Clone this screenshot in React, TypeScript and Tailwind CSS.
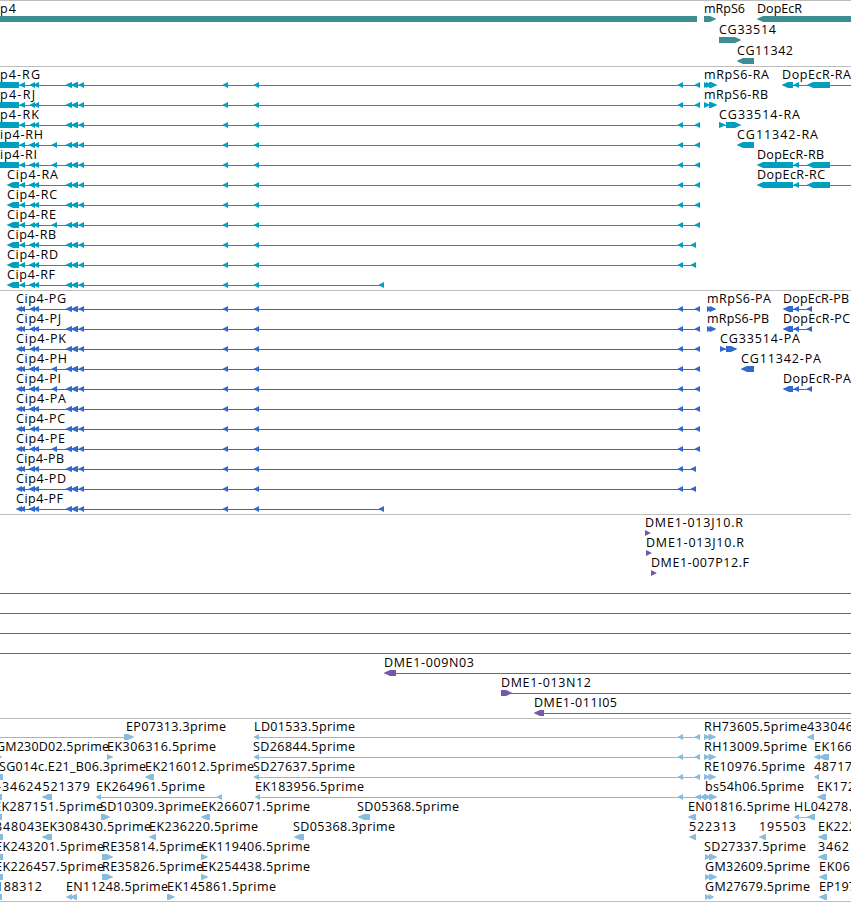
import React from 'react';

type Dir = 'L' | 'R' | 'B';
type Exon = [start: number, end: number, dir: Dir];

interface Feature {
  label?: string;
  x?: number;
  width?: number;
  exons?: Exon[];
  line?: [number, number];
}

interface TrackProps {
  rows: Feature[][];
  className: string;
  rowClassName?: string;
}

const VIEW_WIDTH = 851;
const HEAD = 6;

const exonPath = ([start, end, dir]: Exon): string => {
  const head = Math.min(HEAD, end - start);
  if (dir === 'L') {
    return `M${start} 17.8L${start + head} 15H${end}V21H${start + head}L${start} 18.3Z`;
  }
  if (dir === 'R') {
    return `M${start} 15H${end - head}L${end} 17.8V18.3L${end - head} 21H${start}Z`;
  }
  return `M${start} 15H${end}V21H${start}Z`;
};

const FeatureGlyph: React.FC<{ feature: Feature }> = ({ feature }) => (
  <g>
    {feature.line && (
      <rect x={feature.line[0]} y={18} width={feature.line[1] - feature.line[0]} height={1} />
    )}
    {feature.exons?.map((exon, i) => (
      <path key={i} d={exonPath(exon)} />
    ))}
    {feature.label && (
      <text x={feature.x} y={12} textLength={feature.width} className="fill-black">
        {feature.label}
      </text>
    )}
  </g>
);

const Track: React.FC<TrackProps> = ({ rows, className, rowClassName = 'h-5' }) => (
  <section className={`w-full border-t border-[#bebebe] overflow-hidden ${className}`}>
    {rows.map((features, i) => (
      <svg
        key={i}
        width={VIEW_WIDTH}
        className={`block overflow-visible font-['Open_Sans',sans-serif] text-[12.5px] fill-current ${rowClassName}`}
      >
        {features.map((feature, j) => (
          <FeatureGlyph key={j} feature={feature} />
        ))}
      </svg>
    ))}
  </section>
);

// Genes

const GENES: Feature[][] = [
  [
    { label: 'p4', x: 0, width: 16, exons: [[0, 697, 'B']] },
    { label: 'mRpS6', x: 704, width: 41, exons: [[704, 716, 'R']] },
    { label: 'DopEcR', x: 757, width: 45, exons: [[757, 860, 'L']] },
  ],
  [{ label: 'CG33514', x: 719, width: 57, exons: [[719, 741, 'R']] }],
  [{ label: 'CG11342', x: 737, width: 56, exons: [[737, 754, 'L']] }],
];

// Cip4 isoforms share everything but the first exons and the last one

interface Isoform {
  label: string;
  x: number;
  width: number;
  first: Exon[];
  second: number;
  extra?: boolean;
  last: number;
}

const cip4 = ({ label, x, width, first, second, extra, last }: Isoform): Feature => {
  const exons: Exon[] = [
    ...first,
    [second, 35, 'L'],
    [33.5, 39, 'L'],
    [65.7, 72, 'L'],
    [71, 78, 'L'],
    [78.5, 84, 'L'],
    [222.7, 228, 'L'],
    [253.7, 259, 'L'],
  ];
  if (extra) exons.push([51.5, 57, 'L']);
  if (last > 600) exons.push([677.7, 683, 'L']);
  exons.push([last - 5.3, last, 'L']);
  return { label, x, width, exons, line: [first[0][0] + 3, last] };
};

const LONG_UTR: Exon[] = [[0, 19, 'B'], [19.3, 25, 'L']];
const SHORT_UTR: Exon[] = [[7, 19, 'L'], [19.3, 25, 'L']];
const CODING: Exon[] = [[16, 22, 'L'], [19.5, 25, 'L']];

const MRPS6_R: Exon[] = [[704, 709, 'R'], [706, 712, 'R'], [709, 717, 'R']];
const MRPS6_P: Exon[] = [[707, 712, 'R'], [709.5, 716, 'R']];
const DOPECR_R: Exon[] = [[757, 793, 'L'], [793.5, 799, 'L'], [807, 830, 'L']];
const DOPECR_P: Exon[] = [[783, 793, 'L'], [793.5, 799, 'L'], [806.7, 812, 'L']];

const TRANSCRIPTS: Feature[][] = [
  [
    cip4({ label: 'p4-RG', x: 0, width: 40, first: LONG_UTR, second: 29.7, last: 700 }),
    { label: 'mRpS6-RA', x: 704, width: 65, exons: MRPS6_R },
    { label: 'DopEcR-RA', x: 782, width: 69, exons: [[782, 793, 'L'], [793.5, 799, 'L'], [807, 830, 'L']], line: [785, 851] },
  ],
  [
    cip4({ label: 'p4-RJ', x: 0, width: 35, first: LONG_UTR, second: 29.7, last: 700 }),
    { label: 'mRpS6-RB', x: 704, width: 64, exons: [[704, 710, 'R'], [709, 717, 'R']] },
  ],
  [
    cip4({ label: 'p4-RK', x: 0, width: 39, first: LONG_UTR, second: 29.7, last: 700 }),
    { label: 'CG33514-RA', x: 719, width: 81, exons: [[719, 725.5, 'R'], [726, 741, 'R']], line: [720, 730] },
  ],
  [
    cip4({ label: 'ip4-RH', x: 0, width: 43, first: LONG_UTR, second: 28.7, extra: true, last: 700 }),
    { label: 'CG11342-RA', x: 737, width: 81, exons: [[737, 754, 'L']] },
  ],
  [
    cip4({ label: 'ip4-RI', x: 0, width: 37, first: LONG_UTR, second: 29, extra: true, last: 700 }),
    { label: 'DopEcR-RB', x: 757, width: 67, exons: DOPECR_R, line: [760, 851] },
  ],
  [
    cip4({ label: 'Cip4-RA', x: 7, width: 51, first: SHORT_UTR, second: 28.7, last: 700 }),
    { label: 'DopEcR-RC', x: 757, width: 68, exons: DOPECR_R, line: [760, 851] },
  ],
  [cip4({ label: 'Cip4-RC', x: 7, width: 50, first: SHORT_UTR, second: 29.7, last: 700 })],
  [cip4({ label: 'Cip4-RE', x: 7, width: 49, first: SHORT_UTR, second: 29.7, extra: true, last: 700 })],
  [cip4({ label: 'Cip4-RB', x: 7, width: 49, first: SHORT_UTR, second: 28.7, last: 696 })],
  [cip4({ label: 'Cip4-RD', x: 7, width: 51, first: SHORT_UTR, second: 28.7, last: 696 })],
  [cip4({ label: 'Cip4-RF', x: 7, width: 48, first: SHORT_UTR, second: 28.7, last: 384 })],
];

const PROTEINS: Feature[][] = [
  [
    cip4({ label: 'Cip4-PG', x: 16, width: 50, first: CODING, second: 29.7, last: 700 }),
    { label: 'mRpS6-PA', x: 707, width: 64, exons: MRPS6_P },
    { label: 'DopEcR-PB', x: 783, width: 66, exons: DOPECR_P, line: [786, 810] },
  ],
  [
    cip4({ label: 'Cip4-PJ', x: 16, width: 45, first: CODING, second: 29.7, last: 700 }),
    { label: 'mRpS6-PB', x: 707, width: 62, exons: MRPS6_P },
    { label: 'DopEcR-PC', x: 783, width: 67, exons: DOPECR_P, line: [786, 810] },
  ],
  [
    cip4({ label: 'Cip4-PK', x: 16, width: 50, first: CODING, second: 29.7, last: 700 }),
    { label: 'CG33514-PA', x: 720, width: 80, exons: [[720, 726, 'R'], [726, 737, 'R']], line: [721, 730] },
  ],
  [
    cip4({ label: 'Cip4-PH', x: 16, width: 51, first: CODING, second: 28.7, extra: true, last: 700 }),
    { label: 'CG11342-PA', x: 741, width: 80, exons: [[741, 754, 'L']] },
  ],
  [
    cip4({ label: 'Cip4-PI', x: 16, width: 45, first: CODING, second: 28.7, extra: true, last: 700 }),
    { label: 'DopEcR-PA', x: 783, width: 68, exons: DOPECR_P, line: [786, 810] },
  ],
  [cip4({ label: 'Cip4-PA', x: 16, width: 50, first: CODING, second: 28.7, last: 700 })],
  [cip4({ label: 'Cip4-PC', x: 16, width: 49, first: CODING, second: 29.7, last: 700 })],
  [cip4({ label: 'Cip4-PE', x: 16, width: 49, first: CODING, second: 29.7, extra: true, last: 700 })],
  [cip4({ label: 'Cip4-PB', x: 16, width: 48, first: CODING, second: 28.7, last: 696 })],
  [cip4({ label: 'Cip4-PD', x: 16, width: 50, first: CODING, second: 28.7, last: 696 })],
  [cip4({ label: 'Cip4-PF', x: 16, width: 47, first: CODING, second: 28.7, last: 384 })],
];

const BAC_ENDS: Feature[][] = [
  [{ label: 'DME1-013J10.R', x: 645, width: 98, exons: [[645, 650.5, 'R']] }],
  [{ label: 'DME1-013J10.R', x: 646, width: 98, exons: [[646, 651.5, 'R']] }],
  [{ label: 'DME1-007P12.F', x: 651, width: 98, exons: [[651, 656.5, 'R']] }],
  [{ line: [0, 851] }],
  [{ line: [0, 851] }],
  [{ line: [0, 851] }],
  [{ line: [0, 851] }],
  [{ label: 'DME1-009N03', x: 384, width: 90, exons: [[384, 396, 'L']], line: [390, 851] }],
  [{ label: 'DME1-013N12', x: 501, width: 90, exons: [[501, 512, 'R']], line: [504, 851] }],
  [{ label: 'DME1-011I05', x: 534, width: 83, exons: [[534, 544, 'L']], line: [540, 851] }],
];

// ESTs

const SPLICED: Exon[] = [[253.7, 259, 'L'], [677.7, 683, 'L'], [694.7, 700, 'L']];
const FIVE_PRIME: Exon[] = [[704, 710, 'R'], [708.5, 716, 'R']];

const ESTS: Feature[][] = [
  [
    { label: 'EP07313.3prime', x: 126, width: 100, exons: [[124, 134, 'R']], line: [0, 128] },
    { label: 'LD01533.5prime', x: 254, width: 101, exons: SPLICED, line: [256, 699] },
    { label: 'RH73605.5prime', x: 704, width: 103, exons: FIVE_PRIME },
    { label: '433046', x: 807, width: 46, exons: [[807, 814, 'L']] },
  ],
  [
    { label: 'GM230D02.5prime', x: -4, width: 113, exons: [[-4, 2, 'R']] },
    { label: 'EK306316.5prime', x: 107, width: 109, exons: [[107, 113, 'R']] },
    { label: 'SD26844.5prime', x: 253, width: 102, exons: SPLICED, line: [256, 699] },
    { label: 'RH13009.5prime', x: 704, width: 103, exons: FIVE_PRIME },
    { label: 'EK166', x: 814, width: 38, exons: [[814, 820, 'L'], [818.5, 829, 'L']] },
  ],
  [
    { label: 'SG014c.E21_B06.3prime', x: -1, width: 147, exons: [[0, 3, 'B']] },
    { label: 'EK216012.5prime', x: 145, width: 109, exons: [[145, 154, 'L']] },
    { label: 'SD27637.5prime', x: 253, width: 102, exons: SPLICED, line: [256, 699] },
    { label: 'RE10976.5prime', x: 704, width: 101, exons: FIVE_PRIME },
    { label: '48717', x: 814, width: 38, exons: [[814, 819, 'L']] },
  ],
  [
    { label: '-34624521379', x: -3, width: 93, exons: [[0, 2, 'B'], [42, 52, 'L']] },
    { label: 'EK264961.5prime', x: 96, width: 109, exons: [[96, 101, 'L'], [216.7, 222, 'L']], line: [98, 220] },
    { label: 'EK183956.5prime', x: 255, width: 109, exons: [[255, 260, 'L'], [677.7, 683, 'L'], [695, 701, 'L'], [699.5, 706, 'L']], line: [258, 704] },
    { label: 'bs54h06.5prime', x: 705, width: 99, exons: [[704, 711, 'R'], [709, 717, 'R']] },
    { label: 'EK172', x: 817, width: 38, exons: [[817, 826, 'L']] },
  ],
  [
    { label: 'EK287151.5prime', x: -6, width: 109, exons: [[0, 2, 'B']] },
    { label: 'SD10309.3prime', x: 100, width: 101, exons: [[101, 110, 'R']] },
    { label: 'EK266071.5prime', x: 201, width: 109, exons: [[201, 210, 'L']] },
    { label: 'SD05368.5prime', x: 357, width: 102, exons: [[358, 370, 'L']] },
    { label: 'EN01816.5prime', x: 688, width: 102, exons: [[688, 696, 'L']] },
    { label: 'HL04278.', x: 794, width: 58, exons: [[794, 799, 'L'], [807, 815, 'L']], line: [796, 810] },
  ],
  [
    { label: '348043', x: -5, width: 47, exons: [[0, 3, 'B']] },
    { label: 'EK308430.5prime', x: 42, width: 109, exons: [[42, 52, 'L']] },
    { label: 'EK236220.5prime', x: 149, width: 109, exons: [[149, 156, 'L']] },
    { label: 'SD05368.3prime', x: 293, width: 102, exons: [[294, 304, 'L']] },
    { label: '522313', x: 689, width: 47, exons: [[689, 696, 'L']] },
    { label: '195503', x: 759, width: 47, exons: [[759, 766, 'L']] },
    { label: 'EK222', x: 818, width: 38, exons: [[818, 827, 'L']] },
  ],
  [
    { label: 'EK243201.5prime', x: -5, width: 109, exons: [[0, 3, 'B']] },
    { label: 'RE35814.5prime', x: 102, width: 101, exons: [[102, 113, 'R']] },
    { label: 'EK119406.5prime', x: 201, width: 109, exons: [[201, 208, 'R']] },
    { label: 'SD27337.5prime', x: 704, width: 102, exons: [[705, 711, 'R'], [709, 717, 'R']] },
    { label: '3462', x: 818, width: 31, exons: [[818, 827, 'L']] },
  ],
  [
    { label: 'EK226457.5prime', x: -5, width: 109, exons: [[0, 3, 'B']] },
    { label: 'RE35826.5prime', x: 102, width: 101, exons: [[102, 113, 'R']] },
    { label: 'EK254438.5prime', x: 201, width: 109, exons: [[201, 208, 'R']] },
    { label: 'GM32609.5prime', x: 705, width: 105, exons: [[705, 711, 'R'], [709, 717, 'R']] },
    { label: 'EK06', x: 819, width: 31, exons: [[819, 827, 'L']] },
  ],
  [
    { label: '188312', x: -4, width: 46, exons: [[0, 2, 'B']] },
    { label: 'EN11248.5prime', x: 66, width: 102, exons: [[66, 72, 'L'], [70, 77, 'L']] },
    { label: 'EK145861.5prime', x: 167, width: 109, exons: [[167, 175, 'R']] },
    { label: 'GM27679.5prime', x: 705, width: 105, exons: [[705, 710, 'R'], [708.5, 714, 'R']] },
    { label: 'EP197', x: 819, width: 37, exons: [[819, 827, 'L']] },
  ],
];

const App: React.FC = () => (
  <main className="flex w-[851px] h-[902px] flex-col overflow-hidden bg-white">
    <Track rows={GENES} className="h-[66px] text-[#3d8d93]" rowClassName="h-[21px]" />
    <Track rows={TRANSCRIPTS} className="h-56 text-[#009fbf]" />
    <Track rows={PROTEINS} className="h-56 text-[#326acc]" />
    <Track rows={BAC_ENDS} className="h-[204px] text-[#7558a8]" />
    <Track rows={ESTS} className="h-46 border-b text-[#87bcde]" />
  </main>
);

export default App;
